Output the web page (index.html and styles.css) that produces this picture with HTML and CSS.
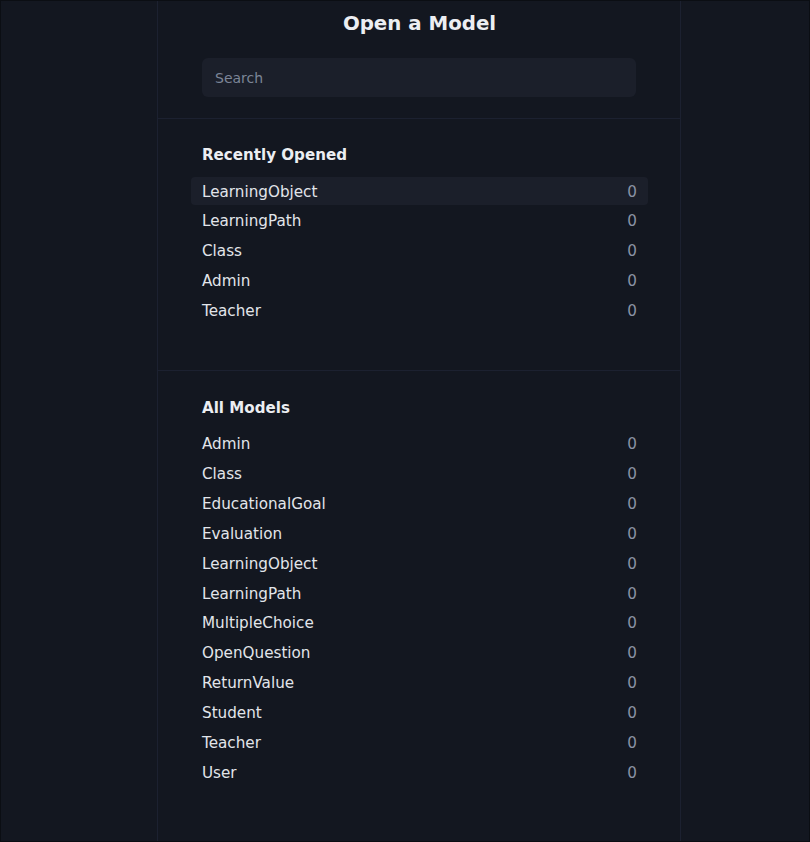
FILE: index.html
```html
<!DOCTYPE html>
<html>
<head>
<meta charset="utf-8">
<link rel="stylesheet" href="styles.css">
</head>
<body>
<div class="frame">
  <div class="column">
    <header class="head">
      <h1 class="title">Open a Model</h1>
      <input class="search" type="text" placeholder="Search">
    </header>
    <section class="section recent">
      <h2 class="heading">Recently Opened</h2>
      <ul class="list">
        <li class="row active"><span>LearningObject</span><span class="count">0</span></li>
        <li class="row"><span>LearningPath</span><span class="count">0</span></li>
        <li class="row"><span>Class</span><span class="count">0</span></li>
        <li class="row"><span>Admin</span><span class="count">0</span></li>
        <li class="row"><span>Teacher</span><span class="count">0</span></li>
      </ul>
    </section>
    <section class="section all">
      <h2 class="heading">All Models</h2>
      <ul class="list">
        <li class="row"><span>Admin</span><span class="count">0</span></li>
        <li class="row"><span>Class</span><span class="count">0</span></li>
        <li class="row"><span>EducationalGoal</span><span class="count">0</span></li>
        <li class="row"><span>Evaluation</span><span class="count">0</span></li>
        <li class="row"><span>LearningObject</span><span class="count">0</span></li>
        <li class="row"><span>LearningPath</span><span class="count">0</span></li>
        <li class="row"><span>MultipleChoice</span><span class="count">0</span></li>
        <li class="row"><span>OpenQuestion</span><span class="count">0</span></li>
        <li class="row"><span>ReturnValue</span><span class="count">0</span></li>
        <li class="row"><span>Student</span><span class="count">0</span></li>
        <li class="row"><span>Teacher</span><span class="count">0</span></li>
        <li class="row"><span>User</span><span class="count">0</span></li>
      </ul>
    </section>
  </div>
</div>
</body>
</html>
```
FILE: styles.css
```css
html, body {
  margin: 0;
  padding: 0;
  background: #131720;
  font-family: "DejaVu Sans", "Noto Sans", sans-serif;
  color: #e6e8ec;
}
.frame {
  box-sizing: border-box;
  width: 810px;
  height: 842px;
  border: 1px solid #0b0e13;
  background: #131720;
  overflow: hidden;
}
.column {
  box-sizing: border-box;
  width: 524px;
  height: 100%;
  margin-left: 156px;
  border-left: 1px solid #1c2130;
  border-right: 1px solid #1c2130;
}
.head {
  padding: 11px 43px 21px 44px;
  border-bottom: 1px solid #1c2130;
  display: flex;
  flex-direction: column;
  align-items: stretch;
}
.title {
  margin: 0;
  font-size: 19.8px;
  line-height: 24px;
  font-weight: bold;
  text-align: center;
  color: #eceef2;
}
.search {
  margin-top: 22px;
  box-sizing: border-box;
  height: 39px;
  width: 434px;
  border: none;
  outline: none;
  border-radius: 6px;
  background: #1b1f2a;
  padding: 0 13px;
  font-family: "DejaVu Sans", sans-serif;
  font-size: 14px;
  color: #e6e8ec;
}
.search::placeholder {
  color: #7c8597;
}
.section {
  padding: 0 43px 0 44px;
}
.recent {
  padding-top: 26px;
  padding-bottom: 46px;
  border-bottom: 1px solid #1c2130;
}
.all {
  padding-top: 27px;
}
.heading {
  margin: 0 0 11.5px 0;
  font-size: 15.1px;
  line-height: 20px;
  font-weight: bold;
  color: #eceef2;
}
.list {
  list-style: none;
  margin: 0 -11px;
  padding: 0;
  display: flex;
  flex-direction: column;
  gap: 1.85px;
}
.row {
  box-sizing: border-box;
  display: flex;
  justify-content: space-between;
  align-items: center;
  height: 28px;
  padding: 2px 11px 0 11px;
  border-radius: 4px;
  font-size: 15.2px;
  color: #e2e5ea;
}
.row.active {
  background: #1b1f2a;
}
.count {
  color: #8a93a4;
}
```
